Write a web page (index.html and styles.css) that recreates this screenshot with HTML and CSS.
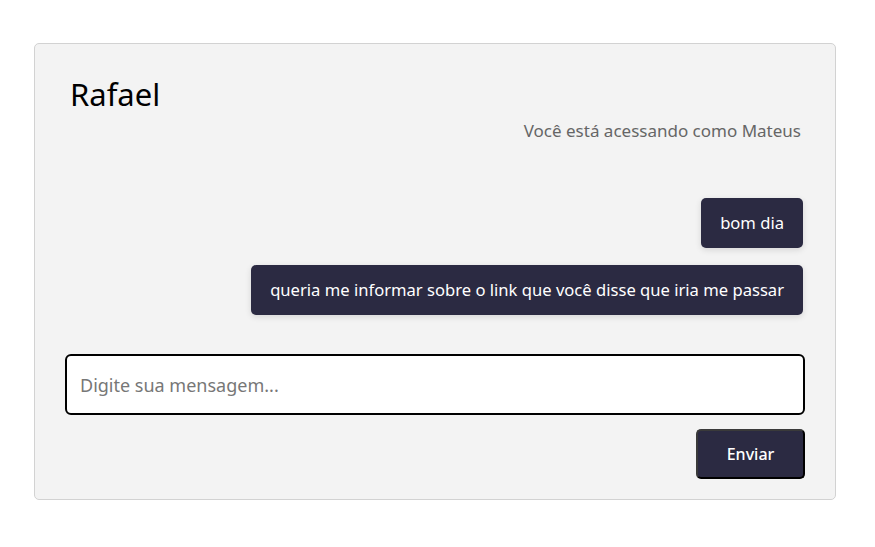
FILE: index.html
```html
<!DOCTYPE html>
<html lang="pt">
<head>
<meta charset="utf-8">
<link rel="stylesheet" href="styles.css">
</head>
<body>
<div class="page">
  <div class="card">
    <h1 class="title">Rafael</h1>
    <p class="user">Você está acessando como Mateus</p>
    <div class="messages">
      <div class="bubble">bom dia</div>
      <div class="bubble">queria me informar sobre o link que você disse que iria me passar</div>
    </div>
    <input class="input" type="text" placeholder="Digite sua mensagem...">
    <div class="actions">
      <button class="send">Enviar</button>
    </div>
  </div>
</div>
</body>
</html>
```
FILE: styles.css
```css
* { box-sizing: border-box; }
html, body { margin: 0; padding: 0; background: #fff; }
body { font-family: "Noto Sans", "Lato", sans-serif; color: #000; }
.page { padding: 43px 39px 0 34px; }
.card {
  width: 802px;
  height: 457px;
  background: #f3f3f3;
  border: 1px solid #d2d2d2;
  border-radius: 5px;
  padding: 30px 30px 0 30px;
  display: flex;
  flex-direction: column;
}
.title {
  margin: 0 0 0 5px;
  font-size: 31px;
  font-weight: 400;
  line-height: 40px;
}
.user {
  margin: 7px 4px 0 0;
  text-align: right;
  font-size: 17px;
  color: #666;
  line-height: 20px;
}
.messages {
  margin-top: 57px;
  display: flex;
  flex-direction: column;
  align-items: flex-end;
  gap: 17px;
  padding-right: 2px;
}
.bubble {
  background: #2b2a42;
  color: #fff;
  font-size: 16.6px;
  line-height: 20px;
  padding: 15px 19px 15px 19px;
  border-radius: 5px;
  box-shadow: 0 2px 6px rgba(0,0,0,0.12);
}
.input {
  margin-top: 39px;
  width: 100%;
  height: 61px;
  border: 2px solid #000;
  border-radius: 6px;
  background: #fff;
  padding: 0 13px;
  font-family: inherit;
  font-size: 18px;
  color: #000;
  outline: none;
}
.input::placeholder { color: #777; }
.actions {
  margin-top: 14px;
  display: flex;
  justify-content: flex-end;
}
.send {
  width: 109px;
  height: 50px;
  background: #2b2a42;
  color: #fff;
  border: 2px solid #3a3a3a;
  border-bottom-color: #000;
  border-right-color: #000;
  border-radius: 5px;
  font-family: inherit;
  font-size: 16px;
  font-weight: 500;
}
```
